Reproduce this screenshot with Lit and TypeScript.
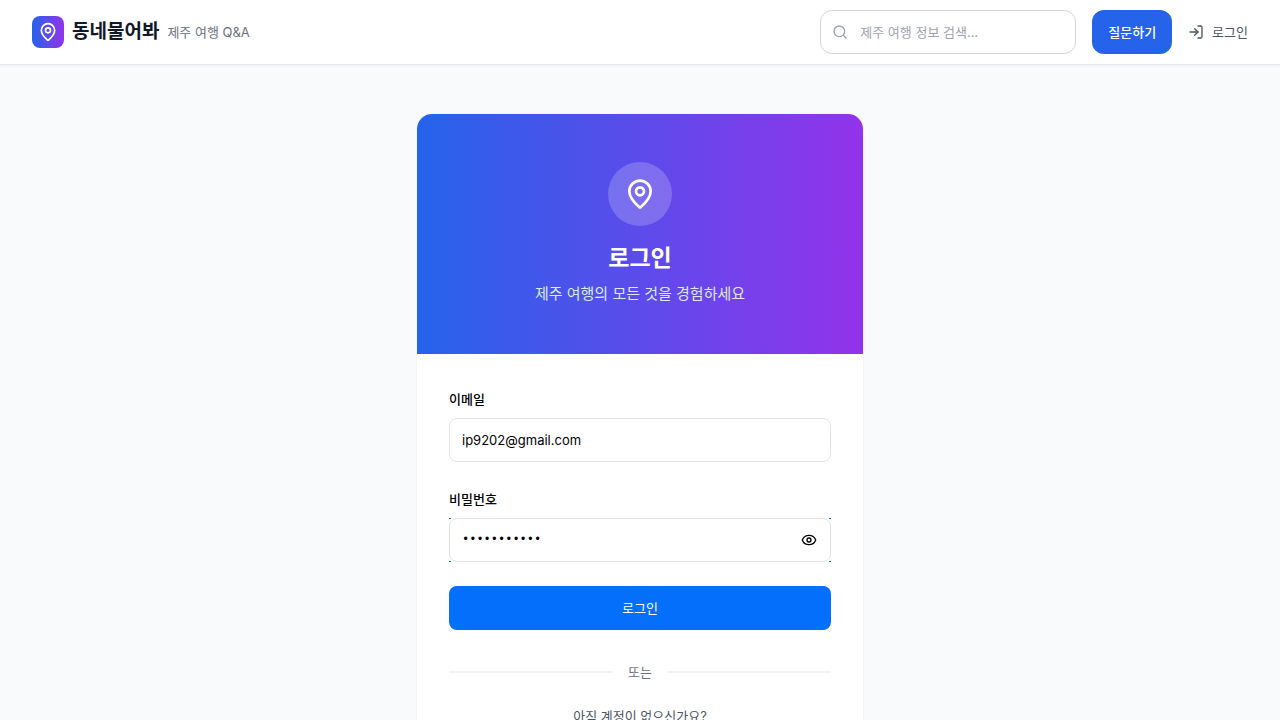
import { LitElement, html, css, svg } from "lit";
import { customElement, state } from "lit/decorators.js";

const icon = (cls: string, body: unknown) => html`
  <svg class=${cls} viewBox="0 0 24 24" fill="none" stroke="currentColor" stroke-width="2"
    stroke-linecap="round" stroke-linejoin="round" aria-hidden="true">${body}</svg>`;

const pin = svg`<path d="M20 10c0 4.993-5.539 10.193-7.399 11.799a1 1 0 0 1-1.202 0C9.539 20.193 4 14.993 4 10a8 8 0 0 1 16 0"/><circle cx="12" cy="10" r="3"/>`;
const search = svg`<circle cx="11" cy="11" r="8"/><path d="m21 21-4.3-4.3"/>`;
const enter = svg`<path d="M15 3h4a2 2 0 0 1 2 2v14a2 2 0 0 1-2 2h-4"/><path d="m10 17 5-5-5-5"/><path d="M15 12H3"/>`;
const eye = svg`<path d="M2.062 12.348a1 1 0 0 1 0-.696 10.75 10.75 0 0 1 19.876 0 1 1 0 0 1 0 .696 10.75 10.75 0 0 1-19.876 0"/><circle cx="12" cy="12" r="3"/>`;

@customElement("app-root")
export class AppRoot extends LitElement {
  @state() private reveal = false;

  static styles = css`
    :host {
      display: block;
      min-height: 100vh;
      background: #f9fafb;
      color: #000;
      font-family: Inter, "Noto Sans CJK KR", sans-serif;
      font-size: 13px;
      line-height: 20px;
    }
    * { box-sizing: border-box; }
    a { color: inherit; text-decoration: none; }
    button, input { font: inherit; color: inherit; }
    button { border: 0; padding: 0; cursor: pointer; }
    svg { display: block; flex: none; }
    .i16 { width: 16px; height: 16px; }
    .i20 { width: 20px; height: 20px; }
    .i32 { width: 32px; height: 32px; }

    .bar {
      display: flex;
      align-items: center;
      justify-content: space-between;
      height: 65px;
      padding: 0 32px;
      background: #fff;
      border-bottom: 1px solid #e5e7eb;
      box-shadow: 0 1px 2px rgba(0, 0, 0, 0.05);
    }
    .brand { display: flex; align-items: center; gap: 8px; }
    .logo {
      display: grid;
      place-items: center;
      width: 32px;
      height: 32px;
      border-radius: 8px;
      color: #fff;
      background: linear-gradient(to right, #2563eb, #9333ea);
    }
    .name { font-size: 19px; line-height: 28px; font-weight: 700; color: #111827; }
    .tag { color: #6b7280; }
    .actions { display: flex; align-items: center; gap: 16px; }
    .search {
      display: flex;
      align-items: center;
      gap: 12px;
      width: 256px;
      height: 44px;
      padding: 0 11px;
      border: 1px solid #d1d5db;
      border-radius: 12px;
      color: #9ca3af;
    }
    .search input {
      flex: 1;
      min-width: 0;
      padding: 0;
      border: 0;
      outline: 0;
      background: none;
      color: #111827;
    }
    .search input::placeholder { color: #9ca3af; opacity: 1; }
    .ask {
      height: 44px;
      padding: 0 16px;
      border-radius: 12px;
      background: #2563eb;
      color: #fff;
      font-weight: 500;
    }
    .signin { display: flex; align-items: center; gap: 8px; color: #4b5563; }

    .page { display: flex; justify-content: center; padding: 48px 16px; }
    .card {
      width: 100%;
      max-width: 448px;
      overflow: hidden;
      border: 1px solid #f3f4f6;
      border-radius: 16px;
      background: #fff;
    }
    .hero {
      display: flex;
      flex-direction: column;
      align-items: center;
      padding: 48px 32px;
      color: #fff;
      background: linear-gradient(to right, #2563eb, #9333ea);
    }
    .badge {
      display: grid;
      place-items: center;
      width: 64px;
      height: 64px;
      margin-bottom: 16px;
      border-radius: 50%;
      background: rgba(255, 255, 255, 0.2);
    }
    .title { margin: 0 0 8px; font-size: 23px; line-height: 32px; font-weight: 700; }
    .lead { margin: 0; font-size: 15px; line-height: 24px; color: #dbeafe; }

    .form { display: flex; flex-direction: column; gap: 24px; padding: 32px 32px 0; }
    .field { display: flex; flex-direction: column; gap: 6px; }
    .field label { line-height: 26px; font-weight: 500; }
    .box {
      display: flex;
      align-items: center;
      height: 44px;
      padding: 0 13px 0 12px;
      border: 1px solid #e4e4e7;
      border-radius: 8px;
      background: #fff;
    }
    .box input { flex: 1; min-width: 0; padding: 0; border: 0; outline: 0; background: none; }
    .box input[type="password"] { font-family: "Liberation Mono", monospace; font-size: 12px; }
    .focus {
      --tick: linear-gradient(#0070f0, #0070f0);
      background:
        var(--tick) left top / 2px 1px no-repeat,
        var(--tick) right top / 2px 1px no-repeat,
        var(--tick) left bottom / 2px 1px no-repeat,
        var(--tick) right bottom / 2px 1px no-repeat;
    }
    .toggle { background: none; }
    .submit {
      height: 44px;
      border-radius: 8px;
      background: #046ffb;
      color: #fff;
    }
    .foot { padding: 32px; text-align: center; }
    .or { display: flex; align-items: center; gap: 16px; margin-bottom: 24px; color: #6b7280; }
    .line { flex: 1; height: 2px; background: #f1f1f2; }
    .join { margin: 0; color: #4b5563; }
  `;

  render() {
    return html`
      <header class="bar">
        <a class="brand" href="#">
          <span class="logo">${icon("i20", pin)}</span>
          <span class="name">동네물어봐</span>
          <span class="tag">제주 여행 Q&amp;A</span>
        </a>
        <nav class="actions">
          <label class="search">
            ${icon("i16", search)}
            <input type="search" aria-label="검색" placeholder="제주 여행 정보 검색..." />
          </label>
          <button class="ask" type="button">질문하기</button>
          <a class="signin" href="#">${icon("i16", enter)}<span>로그인</span></a>
        </nav>
      </header>
      <main class="page">
        <section class="card">
          <div class="hero">
            <span class="badge">${icon("i32", pin)}</span>
            <h1 class="title">로그인</h1>
            <p class="lead">제주 여행의 모든 것을 경험하세요</p>
          </div>
          <form class="form" @submit=${(e: Event) => e.preventDefault()}>
            <div class="field">
              <label for="email">이메일</label>
              <div class="box"><input id="email" type="email" .value=${"ip9202@gmail.com"} /></div>
            </div>
            <div class="field">
              <label for="password">비밀번호</label>
              <div class="focus">
                <div class="box">
                  <input id="password" type=${this.reveal ? "text" : "password"} .value=${"jejutravel1"} />
                  <button class="toggle" type="button" aria-label="비밀번호 표시"
                    @click=${() => (this.reveal = !this.reveal)}>${icon("i16", eye)}</button>
                </div>
              </div>
            </div>
            <button class="submit" type="submit">로그인</button>
          </form>
          <div class="foot">
            <div class="or"><span class="line"></span><span>또는</span><span class="line"></span></div>
            <p class="join">아직 계정이 없으신가요?</p>
          </div>
        </section>
      </main>
    `;
  }
}
